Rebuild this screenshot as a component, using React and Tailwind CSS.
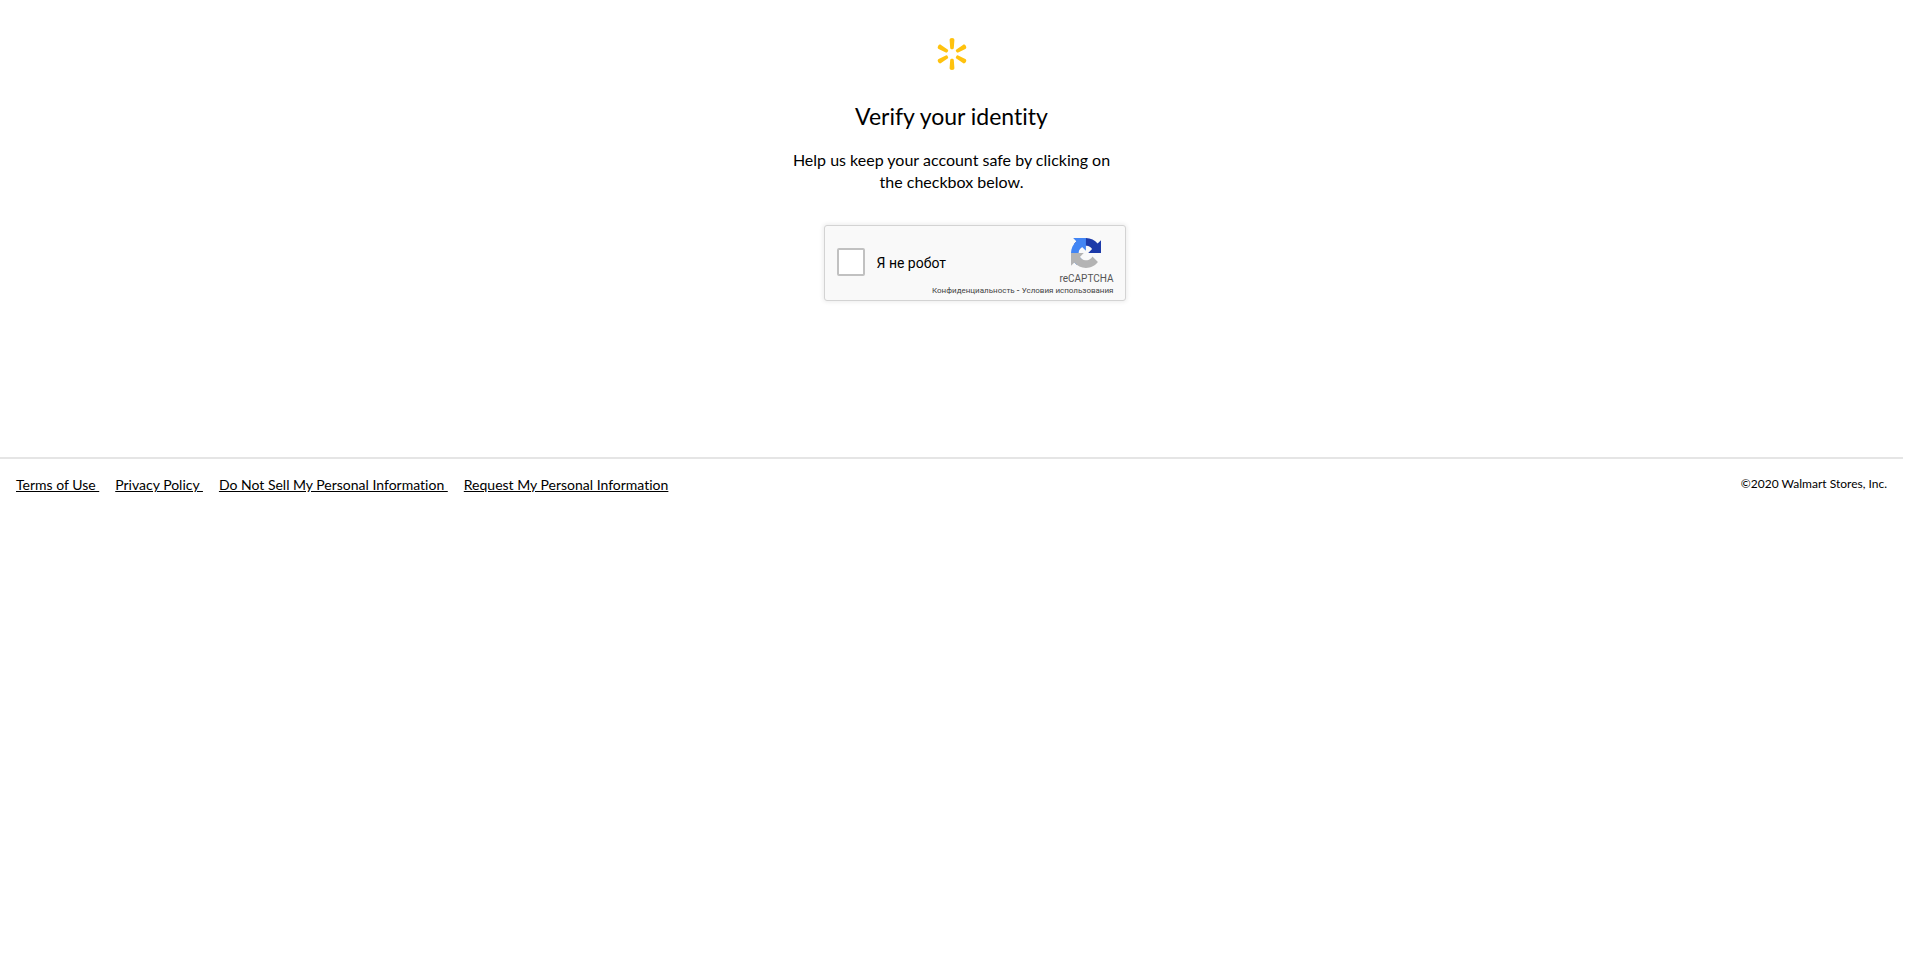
function Spark() {
  return (
    <svg className="h-8 w-8" viewBox="0 0 32 32" fill="#ffc20e" role="img" aria-label="Walmart">
      {[0, 60, 120, 180, 240, 300].map((angle) => (
        <path
          key={angle}
          transform={`rotate(${angle} 16 16)`}
          d="M16 0C14.500 0 13.500 .8 13.600 2L14.200 9.900C14.300 10.800 15 11.200 16 11.200S17.700 10.800 17.800 9.900L18.400 2C18.500 .8 17.500 0 16 0Z"
        />
      ))}
    </svg>
  );
}

function RecaptchaLogo() {
  return (
    <svg className="h-[30px] w-[30px]" viewBox="0 0 64 64" aria-hidden="true">
      <path
        fill="#1c3aa9"
        d="M64 31.955l-.033-1.37V4.687l-7.16 7.16C50.948 4.674 42.033.093 32.05.093c-10.4 0-19.622 4.96-25.458 12.64l11.736 11.86a15.55 15.55 0 0 1 4.754-5.334c2.05-1.6 4.952-2.906 8.968-2.906.485 0 .86.057 1.135.163 4.976.393 9.288 3.14 11.828 7.124l-8.307 8.307L64 31.953"
      />
      <path
        fill="#4285f4"
        d="M31.862.094l-1.37.033H4.594l7.16 7.16C4.58 13.147 0 22.06 0 32.046c0 10.4 4.96 19.622 12.64 25.458L24.5 45.768a15.55 15.55 0 0 1-5.334-4.754c-1.6-2.05-2.906-4.952-2.906-8.968 0-.485.057-.86.163-1.135.393-4.976 3.14-9.288 7.124-11.828l8.307 8.307L31.86.095"
      />
      <path
        fill="#b4b4b4"
        d="M.001 32.045l.033 1.37v25.898l7.16-7.16c5.86 7.173 14.774 11.754 24.76 11.754 10.4 0 19.622-4.96 25.458-12.64l-11.736-11.86a15.55 15.55 0 0 1-4.754 5.334c-2.05 1.6-4.952 2.906-8.968 2.906-.485 0-.86-.057-1.135-.163-4.976-.393-9.288-3.14-11.828-7.124l8.307-8.307c-10.522.04-22.4.066-27.295-.005"
      />
    </svg>
  );
}

function Captcha() {
  return (
    <div className="w-[302px] rounded-[3px] border border-[#d3d3d3] bg-[#f9f9f9] pt-3 pr-[11px] pb-[3px] pl-3 font-['Roboto',sans-serif] shadow-[0_0_4px_1px_rgba(0,0,0,0.08)]">
      <div className="flex justify-between">
        <div className="flex items-center gap-3">
          <input
            id="not-robot"
            type="checkbox"
            className="h-7 w-7 appearance-none rounded-[2px] border-2 border-[#c1c1c1] bg-white"
          />
          <label htmlFor="not-robot" className="pt-1 text-sm leading-[17px] text-black">
            Я не робот
          </label>
        </div>
        <div className="flex flex-col items-center">
          <RecaptchaLogo />
          <span className="mt-[5px] text-[10px] leading-[12px] text-[#555]">reCAPTCHA</span>
        </div>
      </div>
      <div className="text-right text-[8px] leading-[12px] text-[#444]">
        <a href="#privacy">Конфиденциальность</a>
        <span aria-hidden="true" className="font-bold"> - </span>
        <a href="#terms">Условия использования</a>
      </div>
    </div>
  );
}

const links = ["Terms of Use ", "Privacy Policy ", "Do Not Sell My Personal Information ", "Request My Personal Information"];

export default function App() {
  return (
    <div className="min-h-screen bg-white pr-[17px] font-['Lato',sans-serif] text-black [font-variant-ligatures:none]">
      <main className="flex min-h-[457px] flex-col items-center pt-[38px]">
        <Spark />
        <h1 className="mt-[30px] text-[23px] leading-8">Verify your identity</h1>
        <p className="mt-[17px] text-center text-base leading-[22px]">
          Help us keep your account safe by clicking on
          <br />
          the checkbox below.
        </p>
        <div className="mt-8 pl-[46px]">
          <Captcha />
        </div>
      </main>
      <footer className="flex items-start justify-between border-t-2 border-[#e5e5e5] px-4 pt-4">
        <nav className="flex gap-4 text-sm leading-5">
          {links.map((text) => (
            <a key={text} href="#" className="whitespace-pre underline">
              {text}
            </a>
          ))}
        </nav>
        <p className="text-xs leading-[18px]">©2020 Walmart Stores, Inc.</p>
      </footer>
    </div>
  );
}
